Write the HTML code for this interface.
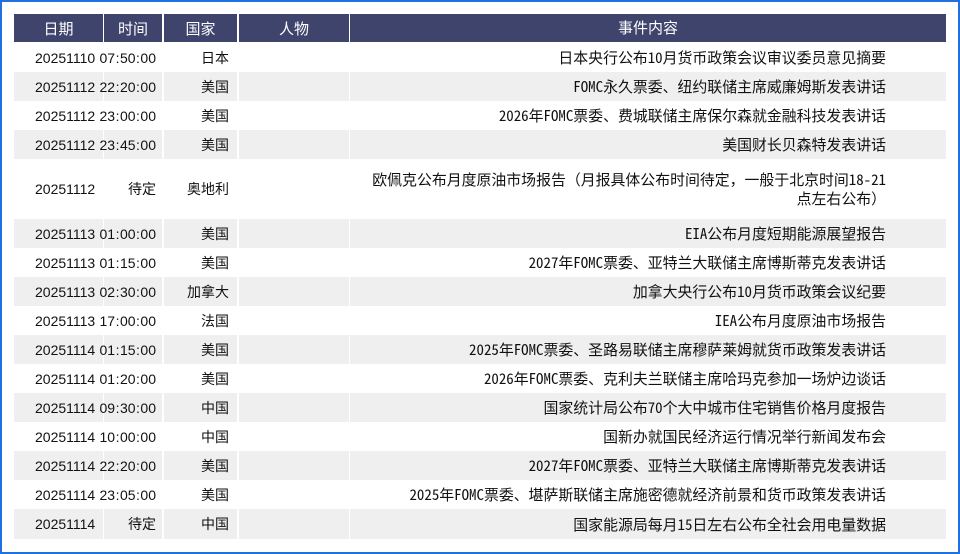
<!DOCTYPE html>
<html><head><meta charset="utf-8"><style>
html,body{margin:0;padding:0;}
body{width:960px;height:554px;position:relative;background:#fff;overflow:hidden;font-family:"Liberation Sans","Noto Sans CJK SC",sans-serif;font-size:14px;color:#111;}
.frame{position:absolute;left:0;top:0;width:956px;height:550px;border:2px solid #1f6fe5;}
.row{position:absolute;left:14px;width:932px;height:29px;}
.c{position:absolute;top:0;height:100%;display:flex;align-items:center;box-sizing:border-box;white-space:nowrap;}
.g .c{background:#efefef;}
.h .c{background:#3f446d;color:#fff;justify-content:center;font-size:15px;}
.c1{left:0;width:89px;padding-left:21px;font-size:14px;}
.c2{left:90px;width:58px;justify-content:flex-end;padding-right:6px;overflow:visible;}
.c3{left:150px;width:73px;justify-content:flex-end;padding-right:8px;}
.c4{left:225px;width:110px;}
.c5{left:336px;width:596px;justify-content:flex-end;padding-right:60px;text-align:right;line-height:19px;font-family:"Noto Sans Mono CJK SC","Noto Sans CJK SC",monospace;font-size:14.9px;}
.t{font-size:14px;}
.t b{font-weight:normal;padding:0 0.5px;}
</style></head><body>
<div class="frame"></div>
<div class="row h" style="top:14px;height:28px"><div class="c c1" style="padding:0;font-size:15px">日期</div><div class="c c2" style="padding:0">时间</div><div class="c c3" style="padding:0">国家</div><div class="c c4">人物</div><div class="c c5" style="padding:0;font-family:'Liberation Sans','Noto Sans CJK SC',sans-serif;font-size:15px">事件内容</div></div>

<div class="row" style="top:43px"><div class="c c1">20251110</div><div class="c c2 t">07<b>:</b>50<b>:</b>00</div><div class="c c3">日本</div><div class="c c4"></div><div class="c c5">日本央行公布10月货币政策会议审议委员意见摘要</div></div>
<div class="row g" style="top:72px"><div class="c c1">20251112</div><div class="c c2 t">22<b>:</b>20<b>:</b>00</div><div class="c c3">美国</div><div class="c c4"></div><div class="c c5">FOMC永久票委、纽约联储主席威廉姆斯发表讲话</div></div>
<div class="row" style="top:101px"><div class="c c1">20251112</div><div class="c c2 t">23<b>:</b>00<b>:</b>00</div><div class="c c3">美国</div><div class="c c4"></div><div class="c c5">2026年FOMC票委、费城联储主席保尔森就金融科技发表讲话</div></div>
<div class="row g" style="top:130px"><div class="c c1">20251112</div><div class="c c2 t">23<b>:</b>45<b>:</b>00</div><div class="c c3">美国</div><div class="c c4"></div><div class="c c5">美国财长贝森特发表讲话</div></div>
<div class="row" style="top:159px;height:60px"><div class="c c1">20251112</div><div class="c c2">待定</div><div class="c c3">奥地利</div><div class="c c4"></div><div class="c c5">欧佩克公布月度原油市场报告（月报具体公布时间待定，一般于北京时间18-21<br>点左右公布）</div></div>
<div class="row g" style="top:219px"><div class="c c1">20251113</div><div class="c c2 t">01<b>:</b>00<b>:</b>00</div><div class="c c3">美国</div><div class="c c4"></div><div class="c c5">EIA公布月度短期能源展望报告</div></div>
<div class="row" style="top:248px"><div class="c c1">20251113</div><div class="c c2 t">01<b>:</b>15<b>:</b>00</div><div class="c c3">美国</div><div class="c c4"></div><div class="c c5">2027年FOMC票委、亚特兰大联储主席博斯蒂克发表讲话</div></div>
<div class="row g" style="top:277px"><div class="c c1">20251113</div><div class="c c2 t">02<b>:</b>30<b>:</b>00</div><div class="c c3">加拿大</div><div class="c c4"></div><div class="c c5">加拿大央行公布10月货币政策会议纪要</div></div>
<div class="row" style="top:306px"><div class="c c1">20251113</div><div class="c c2 t">17<b>:</b>00<b>:</b>00</div><div class="c c3">法国</div><div class="c c4"></div><div class="c c5">IEA公布月度原油市场报告</div></div>
<div class="row g" style="top:335px"><div class="c c1">20251114</div><div class="c c2 t">01<b>:</b>15<b>:</b>00</div><div class="c c3">美国</div><div class="c c4"></div><div class="c c5">2025年FOMC票委、圣路易联储主席穆萨莱姆就货币政策发表讲话</div></div>
<div class="row" style="top:364px"><div class="c c1">20251114</div><div class="c c2 t">01<b>:</b>20<b>:</b>00</div><div class="c c3">美国</div><div class="c c4"></div><div class="c c5">2026年FOMC票委、克利夫兰联储主席哈玛克参加一场炉边谈话</div></div>
<div class="row g" style="top:393px"><div class="c c1">20251114</div><div class="c c2 t">09<b>:</b>30<b>:</b>00</div><div class="c c3">中国</div><div class="c c4"></div><div class="c c5">国家统计局公布70个大中城市住宅销售价格月度报告</div></div>
<div class="row" style="top:422px"><div class="c c1">20251114</div><div class="c c2 t">10<b>:</b>00<b>:</b>00</div><div class="c c3">中国</div><div class="c c4"></div><div class="c c5">国新办就国民经济运行情况举行新闻发布会</div></div>
<div class="row g" style="top:451px"><div class="c c1">20251114</div><div class="c c2 t">22<b>:</b>20<b>:</b>00</div><div class="c c3">美国</div><div class="c c4"></div><div class="c c5">2027年FOMC票委、亚特兰大联储主席博斯蒂克发表讲话</div></div>
<div class="row" style="top:480px"><div class="c c1">20251114</div><div class="c c2 t">23<b>:</b>05<b>:</b>00</div><div class="c c3">美国</div><div class="c c4"></div><div class="c c5">2025年FOMC票委、堪萨斯联储主席施密德就经济前景和货币政策发表讲话</div></div>
<div class="row g" style="top:509px;height:30px"><div class="c c1">20251114</div><div class="c c2">待定</div><div class="c c3">中国</div><div class="c c4"></div><div class="c c5">国家能源局每月15日左右公布全社会用电量数据</div></div>
</body></html>
